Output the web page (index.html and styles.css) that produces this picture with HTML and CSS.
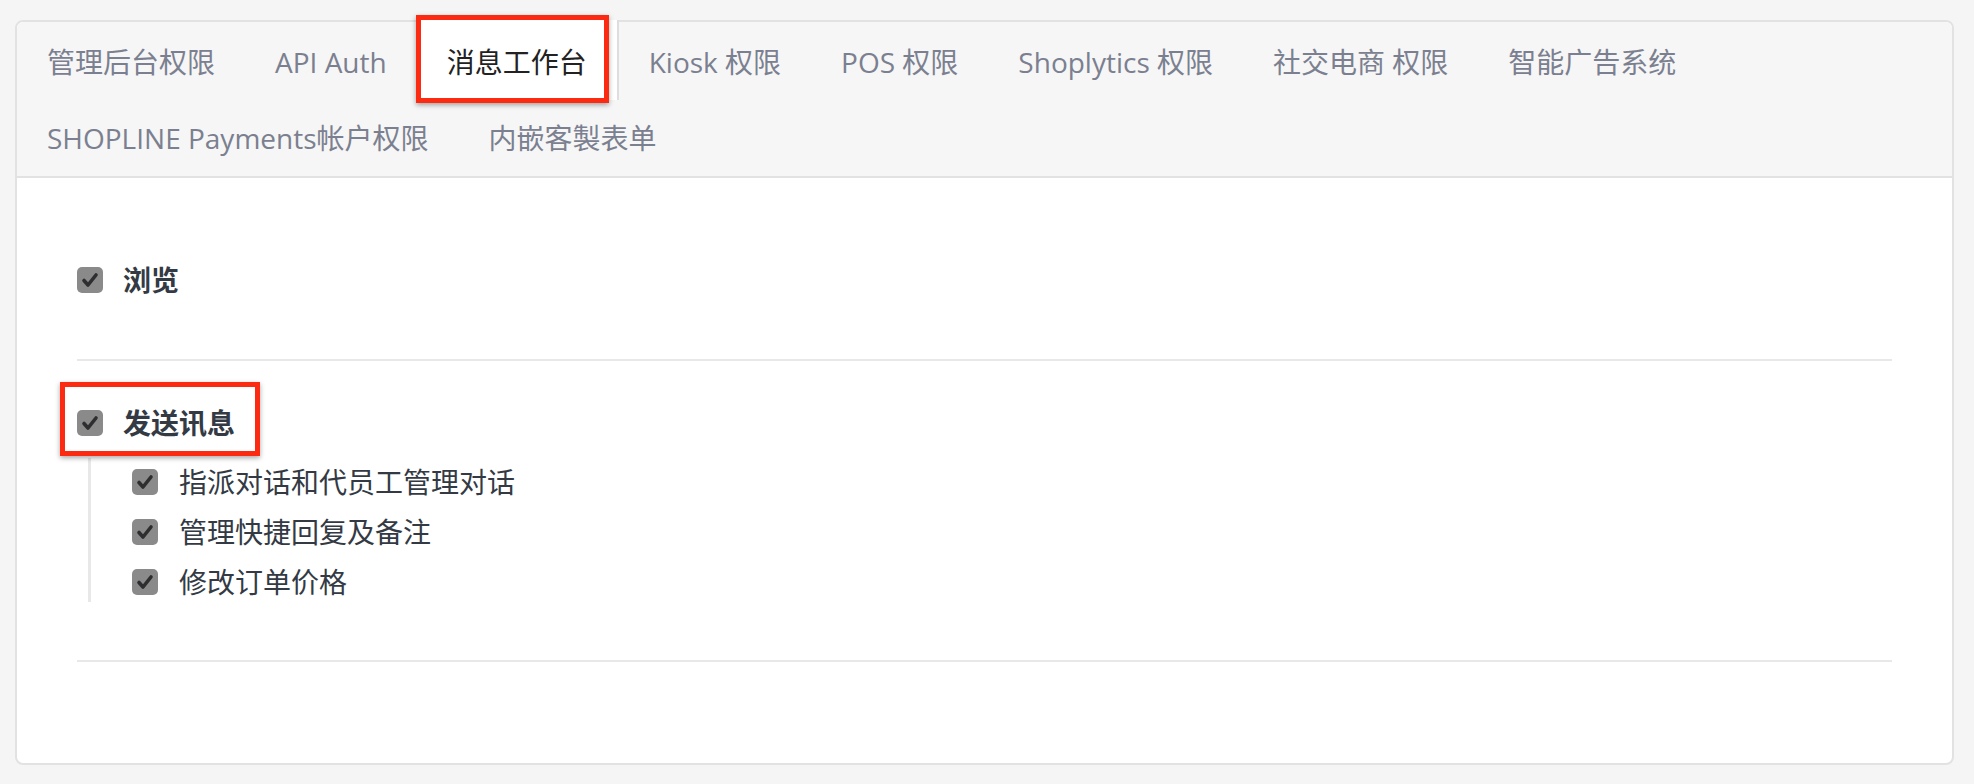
FILE: index.html
```html
<!DOCTYPE html>
<html lang="zh-CN">
  <head>
    <meta charset="UTF-8" />
    <meta name="viewport" content="width=device-width, initial-scale=1.0" />
    <title>权限设置</title>
    <link rel="stylesheet" href="styles.css">
  </head>

  <body>
    <div class="card">
      <ul class="tabs">
        <li class="tab">管理后台权限</li>
        <li class="tab">API Auth</li>
        <li class="tab active">消息工作台<span class="mark mark-tab"></span></li>
        <li class="tab">Kiosk 权限</li>
        <li class="tab">POS 权限</li>
        <li class="tab">Shoplytics 权限</li>
        <li class="tab">社交电商 权限</li>
        <li class="tab">智能广告系统</li>
        <li class="tab">SHOPLINE Payments帐户权限</li>
        <li class="tab">内嵌客製表单</li>
      </ul>

      <div class="content">
        <div class="section">
          <label class="row main">
            <span class="box"><svg viewBox="0 0 26 26"><path d="M7 13.5l4 4.5 8-10" /></svg></span>
            浏览
          </label>
        </div>

        <div class="section">
          <label class="row main">
            <span class="box"><svg viewBox="0 0 26 26"><path d="M7 13.5l4 4.5 8-10" /></svg></span>
            发送讯息
            <span class="mark mark-row"></span>
          </label>
          <div class="sub">
            <label class="row">
              <span class="box"><svg viewBox="0 0 26 26"><path d="M7 13.5l4 4.5 8-10" /></svg></span>
              指派对话和代员工管理对话
            </label>
            <label class="row">
              <span class="box"><svg viewBox="0 0 26 26"><path d="M7 13.5l4 4.5 8-10" /></svg></span>
              管理快捷回复及备注
            </label>
            <label class="row">
              <span class="box"><svg viewBox="0 0 26 26"><path d="M7 13.5l4 4.5 8-10" /></svg></span>
              修改订单价格
            </label>
          </div>
        </div>
      </div>
    </div>
  </body>
</html>
```

FILE: styles.css
```css
html,
body {
  margin: 0;
  background: #f5f5f5;
  font-family: "Open Sans", "Noto Sans CJK SC", sans-serif;
  font-size: 28px;
  color: #333a44;
}

body {
  padding: 20px 20px 20px 15px;
}

.card {
  background: #fff;
  border: 2px solid #e2e2e2;
  border-radius: 8px;
}

.tabs {
  display: flex;
  flex-wrap: wrap;
  margin: 0;
  padding: 2px 0 0;
  list-style: none;
  background: #f6f6f6;
  border-bottom: 2px solid #e2e2e2;
  border-radius: 6px 6px 0 0;
}

.tab {
  position: relative;
  padding: 18px 30px;
  line-height: 40px;
  color: #7b8090;
  white-space: nowrap;
}

.tab.active {
  background: #fff;
  color: #222;
  border-right: 2px solid #dedede;
  margin-top: -4px;
  padding-top: 22px;
}

/* red annotation boxes */
.mark {
  position: absolute;
  border: 5px solid #fb2a10;
  box-shadow: 0 2px 5px rgba(0, 0, 0, 0.35);
  pointer-events: none;
}

.mark-tab {
  left: -1px;
  top: -5px;
  width: 183px;
  height: 78px;
}

.mark-row {
  left: -17px;
  top: -21px;
  width: 190px;
  height: 64px;
}

.content {
  padding: 42px 60px 101px;
}

.section {
  padding: 40px 0 59px;
  border-bottom: 2px solid #e8e8e8;
}

.section + .section {
  padding-top: 42px;
  padding-bottom: 58px;
}

.row {
  position: relative;
  display: flex;
  align-items: center;
  gap: 20px;
  line-height: 40px;
  height: 40px;
}

.row.main {
  font-weight: bold;
}

.box {
  width: 26px;
  height: 26px;
  border-radius: 5px;
  background: #8a8a8a;
  display: flex;
}

.box svg {
  width: 26px;
  height: 26px;
}

.box path {
  fill: none;
  stroke: #2e2e30;
  stroke-width: 3.6;
  stroke-linecap: round;
  stroke-linejoin: round;
}

.sub {
  margin: 15px 0 0 11px;
  padding: 4px 0 0 41px;
  border-left: 3px solid #e8e8e8;
  display: flex;
  flex-direction: column;
  gap: 10px;
}

.sub .row {
  gap: 21px;
}
```
